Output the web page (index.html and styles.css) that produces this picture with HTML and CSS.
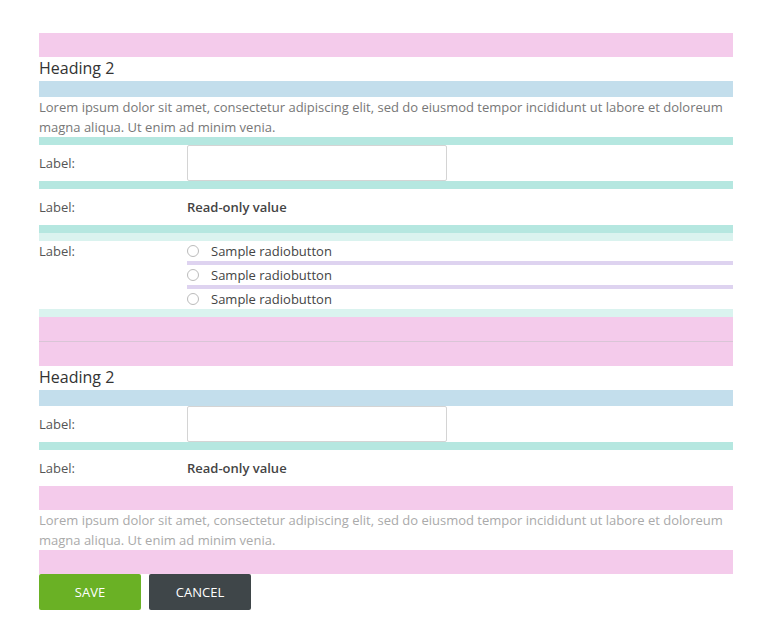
FILE: index.html
```html
<!DOCTYPE html>
<html>
<head>
<meta charset="utf-8">
<link rel="stylesheet" href="styles.css">
</head>
<body>
<div class="page">
  <div class="sp sp-24 pink"></div>
  <h2 class="heading">Heading 2</h2>
  <div class="sp sp-16 blue"></div>
  <p class="text">Lorem ipsum dolor sit amet, consectetur adipiscing elit, sed do eiusmod tempor incididunt ut labore et doloreum magna aliqua. Ut enim ad minim venia.</p>
  <div class="sp sp-8 teal"></div>
  <div class="row row-field">
    <label class="label">Label:</label>
    <input class="input" type="text">
  </div>
  <div class="sp sp-8 teal"></div>
  <div class="row row-field">
    <span class="label">Label:</span>
    <span class="value">Read-only value</span>
  </div>
  <div class="sp sp-8 teal"></div>
  <div class="sp sp-8 lteal"></div>
  <div class="row row-top">
    <span class="label label-line">Label:</span>
    <div class="radios">
      <div class="radio"><span class="circle"></span><span>Sample radiobutton</span></div>
      <div class="sp sp-4 purple"></div>
      <div class="radio"><span class="circle"></span><span>Sample radiobutton</span></div>
      <div class="sp sp-4 purple"></div>
      <div class="radio"><span class="circle"></span><span>Sample radiobutton</span></div>
    </div>
  </div>
  <div class="sp sp-8 lteal"></div>
  <div class="sp sp-24 pink"></div>
  <hr class="divider">
  <div class="sp sp-24 pink"></div>
  <h2 class="heading">Heading 2</h2>
  <div class="sp sp-16 blue"></div>
  <div class="row row-field">
    <label class="label">Label:</label>
    <input class="input" type="text">
  </div>
  <div class="sp sp-8 teal"></div>
  <div class="row row-field">
    <span class="label">Label:</span>
    <span class="value">Read-only value</span>
  </div>
  <div class="sp sp-24 pink"></div>
  <p class="text text-muted">Lorem ipsum dolor sit amet, consectetur adipiscing elit, sed do eiusmod tempor incididunt ut labore et doloreum magna aliqua. Ut enim ad minim venia.</p>
  <div class="sp sp-24 pink"></div>
  <div class="actions">
    <button class="btn btn-save">SAVE</button>
    <button class="btn btn-cancel">CANCEL</button>
  </div>
</div>
</body>
</html>
```
FILE: styles.css
```css
* { box-sizing: border-box; }
body {
  margin: 0;
  background: #fff;
  font-family: "Open Sans", "Noto Sans", sans-serif;
  color: #444;
}
.page {
  width: 694px;
  margin: 33px 0 0 39px;
}
.sp { width: 100%; }
.sp-24 { height: 24px; }
.sp-16 { height: 16px; }
.sp-8 { height: 8px; }
.sp-4 { height: 4px; }
.pink { background: #f4cbeb; }
.blue { background: #c3deec; }
.teal { background: #b5e7e0; }
.lteal { background: #daf3ef; }
.purple { background: #ded3f0; }
.heading {
  margin: 0;
  height: 24px;
  font-size: 16px;
  line-height: 23px;
  font-weight: 400;
  color: #333;
}
.text {
  margin: 0;
  font-size: 13px;
  line-height: 20px;
  color: #777;
}
.text-muted { color: #aaa; }
.row {
  display: grid;
  grid-template-columns: 148px 1fr;
}
.row-field {
  height: 36px;
  align-items: center;
}
.row-top { align-items: start; }
.label {
  font-size: 13px;
  color: #555;
}
.label-line { line-height: 20px; }
.input {
  width: 260px;
  height: 36px;
  border: 1px solid #d4d4d4;
  border-radius: 2px;
  background: #fff;
  margin: 0;
  padding: 0 8px;
  font: inherit;
}
.value {
  font-size: 13px;
  font-weight: 600;
  color: #444;
}
.radio {
  height: 20px;
  display: flex;
  align-items: center;
  font-size: 13px;
  color: #444;
}
.circle {
  width: 12px;
  height: 12px;
  border: 1px solid #bbb;
  border-radius: 50%;
  margin-right: 12px;
  flex: none;
}
.divider {
  margin: 0;
  border: 0;
  height: 1px;
  background: #d9c5d6;
}
.actions {
  display: flex;
  gap: 8px;
}
.btn {
  width: 102px;
  height: 36px;
  border: 0;
  border-radius: 2px;
  font-family: "Open Sans", "Noto Sans", sans-serif;
  font-size: 13px;
  font-weight: 400;
  color: #fff;
  padding: 0;
}
.btn-save { background: #6ab125; }
.btn-cancel { background: #3f4649; }
```
